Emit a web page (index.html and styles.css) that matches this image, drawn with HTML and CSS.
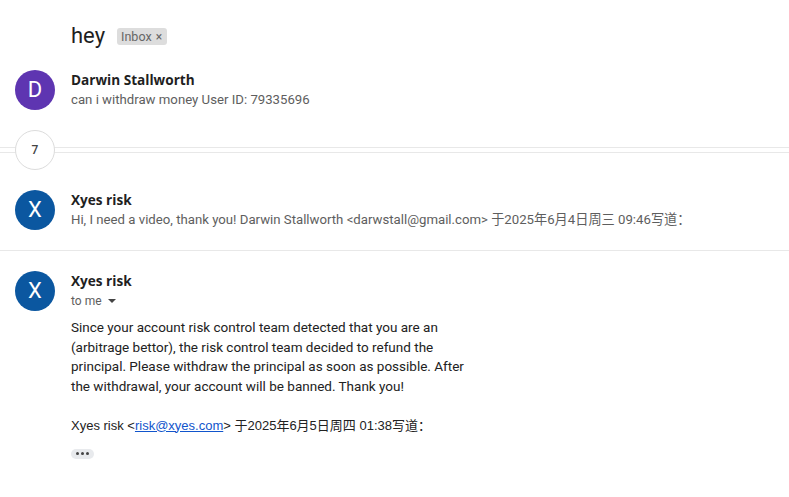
FILE: index.html
```html
<!DOCTYPE html>
<html>
<head>
<meta charset="utf-8">
<link rel="stylesheet" href="styles.css">
</head>
<body>
<div class="thread">
  <div class="subject">
    <h1 class="title">hey</h1>
    <span class="chip">Inbox <span class="chip-x">×</span></span>
  </div>

  <div class="msg msg-first">
    <div class="avatar purple">D</div>
    <div class="msg-body">
      <div class="sender">Darwin Stallworth</div>
      <div class="snippet">can i withdraw money User ID: 79335696</div>
    </div>
  </div>

  <div class="collapsed">
    <div class="count">7</div>
  </div>

  <div class="msg msg-second">
    <div class="avatar blue">X</div>
    <div class="msg-body">
      <div class="sender">Xyes risk</div>
      <div class="snippet">Hi, I need a video, thank you! Darwin Stallworth &lt;darwstall@gmail.com&gt; 于2025年6月4日周三 09:46写道：</div>
    </div>
  </div>

  <div class="msg msg-open">
    <div class="avatar blue">X</div>
    <div class="msg-body">
      <div class="sender">Xyes risk</div>
      <div class="tome">to me <svg class="caret" width="10" height="10" viewBox="0 0 10 10"><path d="M1 3 L9 3 L5 7 Z" fill="#444"/></svg></div>
      <div class="content">
        <p class="para">Since your account risk control team detected that you are an<br>(arbitrage bettor), the risk control team decided to refund the<br>principal. Please withdraw the principal as soon as possible. After<br>the withdrawal, your account will be banned. Thank you!</p>
        <p class="para quote-line">Xyes risk &lt;<a class="link" href="#">risk@xyes.com</a>&gt; 于2025年6月5日周四 01:38写道：</p>
        <div class="more"><span class="dot"></span><span class="dot"></span><span class="dot"></span></div>
      </div>
    </div>
  </div>
</div>
</body>
</html>
```

FILE: styles.css
```css
html, body {
  margin: 0;
  padding: 0;
  background: #fff;
}
body {
  font-family: Roboto, "Noto Sans CJK SC", Arial, sans-serif;
  color: #1f1f1f;
  width: 789px;
  height: 497px;
  overflow: hidden;
}
.subject {
  display: flex;
  align-items: center;
  padding: 21px 0 0 71px;
  height: 30px;
}
.title {
  margin: 0;
  font-family: Roboto, Arial, sans-serif;
  font-weight: 400;
  font-size: 22px;
  line-height: 30px;
  color: #1f1f1f;
}
.chip {
  margin-left: 12px;
  margin-top: 1px;
  background: #dddddd;
  color: #666;
  font-size: 12.5px;
  line-height: 17px;
  height: 17px;
  padding: 0 5px 0 4px;
  border-radius: 3px;
}
.chip-x {
  font-size: 12px;
  margin-left: 1px;
}
.msg {
  display: flex;
  align-items: flex-start;
}
.msg-first {
  margin-top: 19px;
}
.avatar {
  width: 40px;
  height: 40px;
  border-radius: 50%;
  margin: 0 16px 0 15px;
  color: #fff;
  font-size: 22px;
  line-height: 40px;
  text-align: center;
  flex: none;
}
.purple { background: #5e35b1; }
.blue { background: #0b57a0; }
.msg-body {
  flex: 1;
  min-width: 0;
}
.sender {
  font-family: "Open Sans", Roboto, sans-serif;
  font-weight: 700;
  font-size: 13.6px;
  line-height: 20px;
  color: #1f1f1f;
}
.snippet {
  font-size: 13.2px;
  line-height: 20px;
  color: #5e5e5e;
  white-space: nowrap;
}
.collapsed {
  position: relative;
  height: 40px;
  margin-top: 20px;
  padding-left: 15px;
}
.collapsed::before,
.collapsed::after {
  content: "";
  position: absolute;
  left: 0;
  right: 0;
  height: 1px;
  background: #e8e8e8;
}
.collapsed::before { top: 17px; }
.collapsed::after { top: 22px; }
.count {
  position: relative;
  z-index: 1;
  width: 38px;
  height: 38px;
  border: 1px solid #dcdcdc;
  border-radius: 50%;
  background: #fff;
  text-align: center;
  line-height: 38px;
  font-size: 12px;
  font-weight: 500;
  color: #444;
}
.msg-second {
  margin-top: 20px;
  padding-bottom: 20px;
  border-bottom: 1px solid #e8e8e8;
}
.msg-open {
  margin-top: 20px;
}
.tome {
  font-size: 12px;
  line-height: 20px;
  color: #5e5e5e;
  display: flex;
  align-items: center;
}
.caret {
  margin-left: 5px;
}
.content {
  margin-top: 7px;
  font-family: Roboto, "Noto Sans CJK SC", sans-serif;
  font-size: 13.5px;
  line-height: 19.5px;
  color: #222;
}
.para {
  margin: 0 0 19.5px 0;
  white-space: nowrap;
}
.quote-line {
  font-family: Arial, "Liberation Sans", "Noto Sans CJK SC", sans-serif;
  font-size: 13px;
  margin-bottom: 6px;
}
.link {
  color: #1155cc;
  text-decoration: underline;
}
.more {
  display: inline-flex;
  align-items: center;
  gap: 2px;
  background: #e8eaed;
  border-radius: 6px;
  height: 10px;
  padding: 0 5px;
}
.dot {
  width: 3px;
  height: 3px;
  border-radius: 50%;
  background: #444;
}
```
